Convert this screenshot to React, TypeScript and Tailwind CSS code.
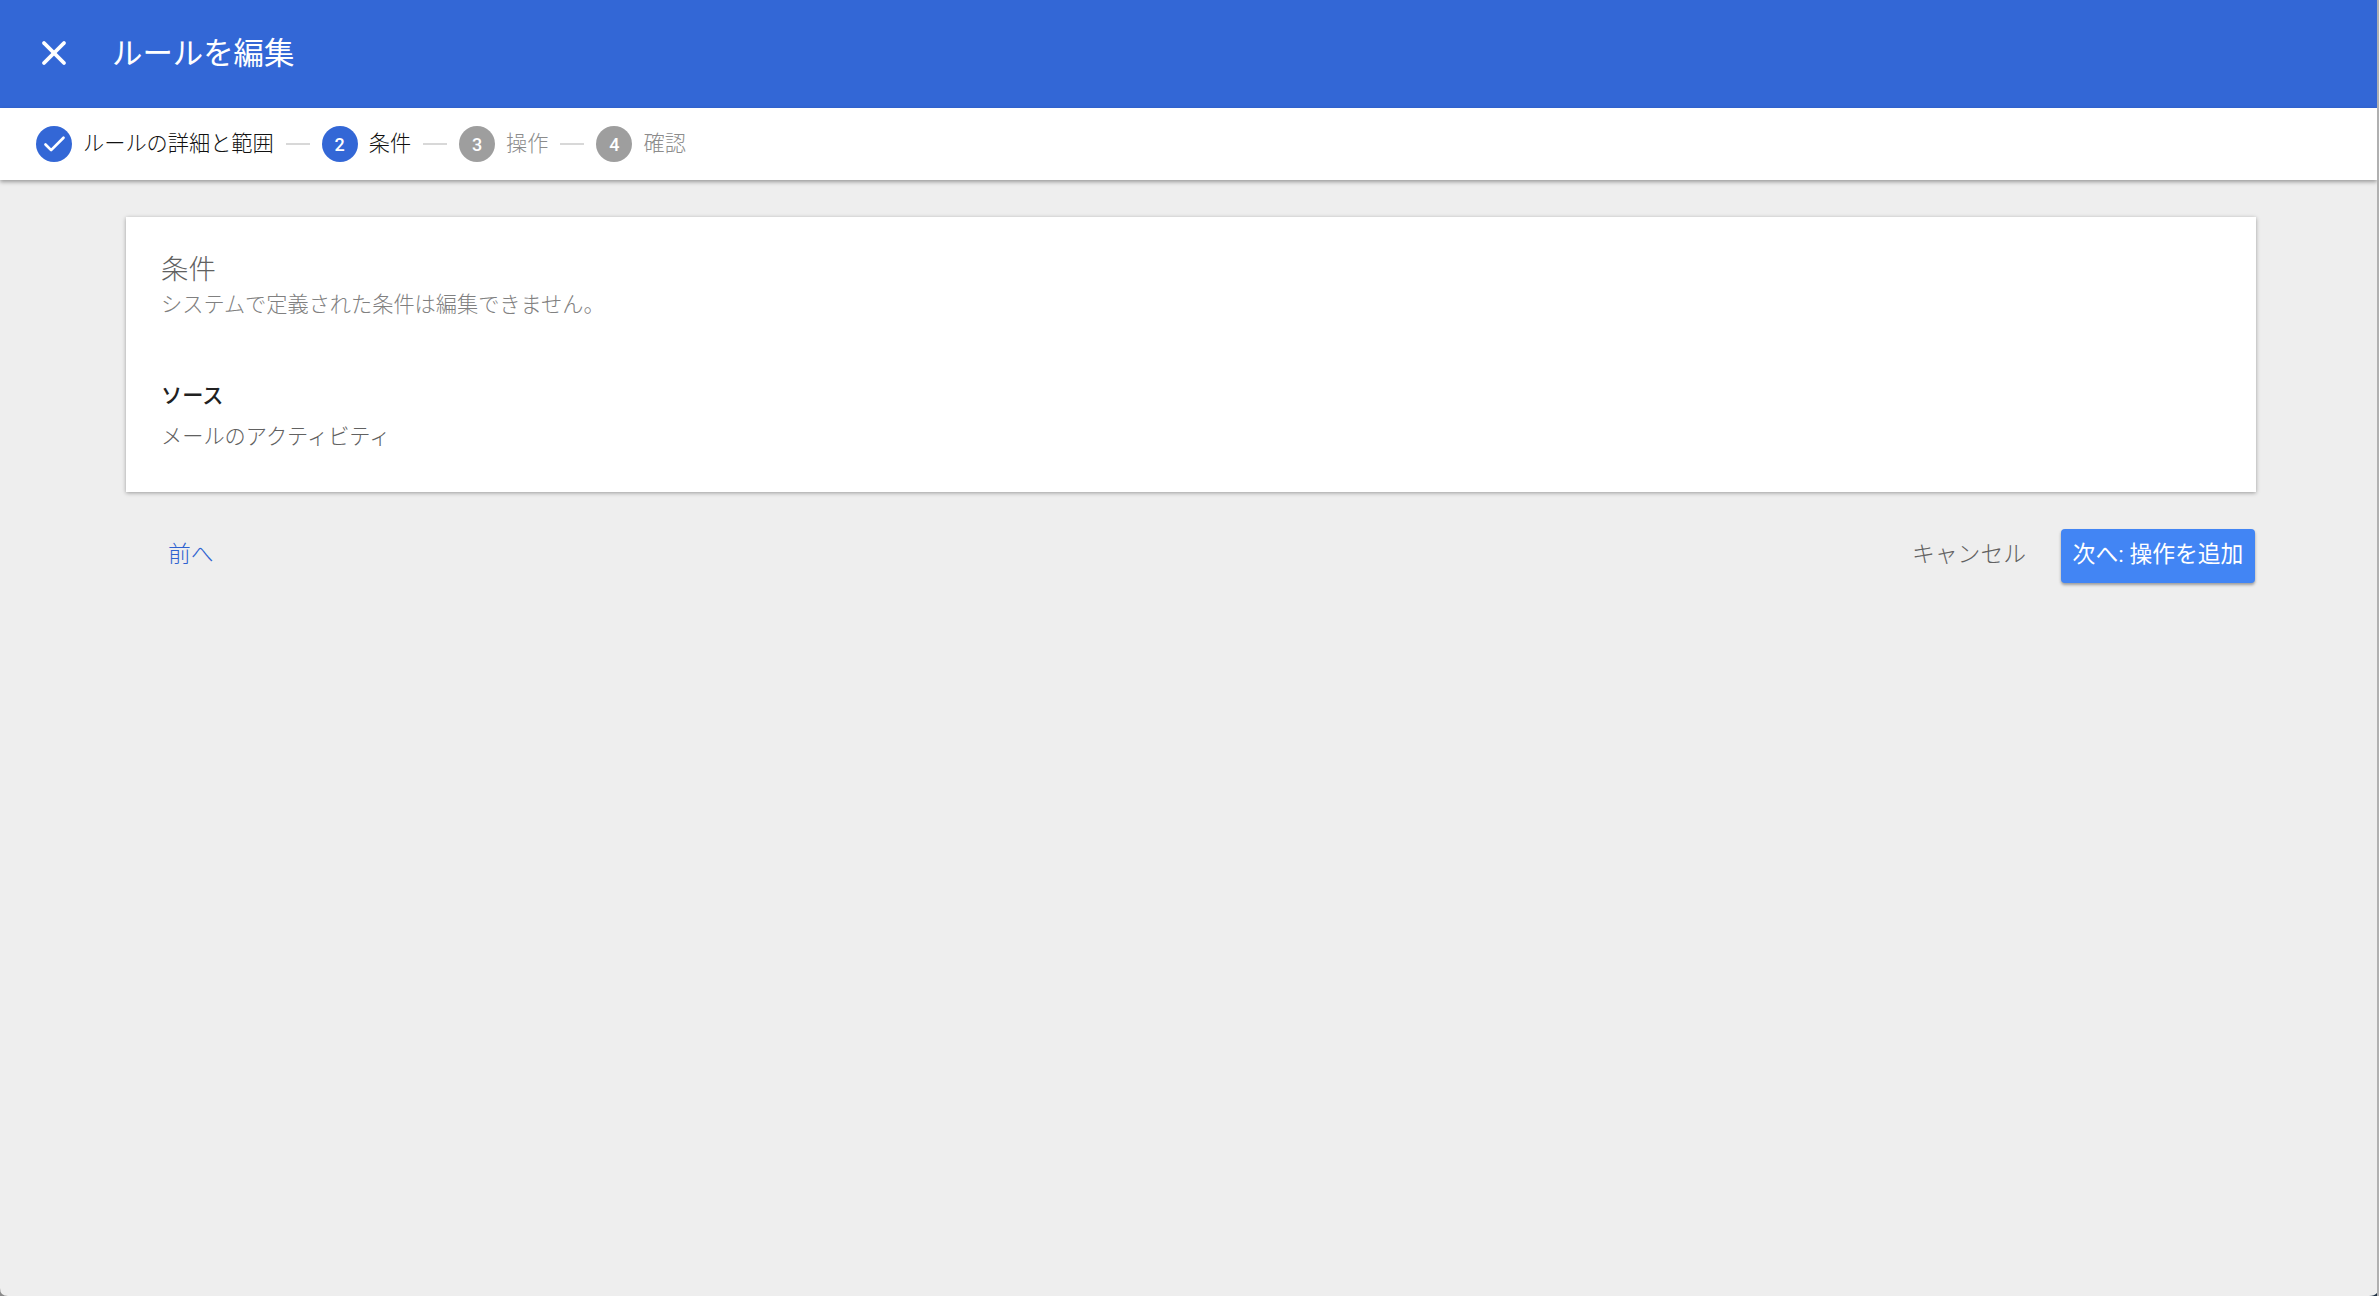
import React from 'react';
import { X, Check } from 'lucide-react';

const FONT = "font-['Roboto','Noto_Sans_CJK_JP',sans-serif]";

type StepState = 'done' | 'active' | 'pending';

interface Step {
    label: string;
    state: StepState;
    number: number;
}

const STEPS: Step[] = [
    { label: 'ルールの詳細と範囲', state: 'done', number: 1 },
    { label: '条件', state: 'active', number: 2 },
    { label: '操作', state: 'pending', number: 3 },
    { label: '確認', state: 'pending', number: 4 },
];

const StepItem: React.FC<{ step: Step }> = ({ step }) => (
    <div className="flex items-center">
        <div
            className={`flex h-9 w-9 items-center justify-center rounded-full text-[18px] font-medium text-white ${
                step.state === 'pending' ? 'bg-[#9e9e9e]' : 'bg-[#3367d6]'
            }`}
        >
            {step.state === 'done' ? <Check className="h-[27px] w-[27px]" strokeWidth={2.4} /> : step.number}
        </div>
        <span className={`ml-[11px] text-[21.2px] font-light ${step.state === 'pending' ? 'text-[#8c8c8c]' : 'text-[#111111]'}`}>
            {step.label}
        </span>
    </div>
);

const App: React.FC = () => {
    return (
        <div className={`relative flex h-[1296px] w-full flex-col overflow-hidden border-r-2 border-[#b0b0b0] bg-[#eeeeee] ${FONT}`}>
            <header className="flex h-[108px] shrink-0 items-center bg-[#3367d6] pl-[34px] text-white">
                <X className="mb-[3px] h-10 w-10" strokeWidth={2.3} />
                <h1 className="ml-[38px] text-[30.4px] font-normal">ルールを編集</h1>
            </header>

            <nav className="z-10 flex h-[72px] shrink-0 items-center gap-3 bg-white pl-[36px] shadow-[0_2px_4px_rgba(0,0,0,0.35)]">
                {STEPS.map((step, i) => (
                    <React.Fragment key={step.label}>
                        {i > 0 && <div className="h-[2px] w-6 bg-[#d8d8d8]" />}
                        <StepItem step={step} />
                    </React.Fragment>
                ))}
            </nav>

            <main className="pt-[37px] pr-[121px] pl-[126px]">
                <section className="h-[275px] bg-white px-[35px] pt-[35px] shadow-[0_1px_4px_rgba(0,0,0,0.35)]">
                    <h2 className="text-[27.4px] leading-[36px] font-light text-[#616161]">条件</h2>
                    <p className="mt-[2px] text-[21.2px] leading-[30px] font-light text-[#808080]">システムで定義された条件は編集できません。</p>
                    <h3 className="mt-[61px] text-[21.2px] leading-[30px] font-medium text-[#212121]">ソース</h3>
                    <p className="mt-[11px] text-[21.2px] leading-[30px] font-light text-[#616161]">メールのアクティビティ</p>
                </section>

                <div className="mt-[37px] flex items-center justify-between">
                    <button className="ml-[42px] pb-[2px] text-[22.8px] font-light text-[#2f62d0]">前へ</button>
                    <div className="flex items-center">
                        <button className="pb-[2px] text-[22.8px] font-light text-[#616161]">キャンセル</button>
                        <button className="mr-[1px] ml-[35px] h-[54px] w-[194px] rounded-[4px] bg-[#4285f4] pb-[2px] text-[22.8px] text-white shadow-[0_2px_3px_rgba(0,0,0,0.35)]">
                            次へ: 操作を追加
                        </button>
                    </div>
                </div>
            </main>

            {/* window corners showing through at the bottom */}
            <svg className="absolute bottom-0 left-0 h-2 w-2" viewBox="0 0 8 8">
                <path d="M0 0 Q0 8 8 8 H0 Z" fill="#8a8a8a" />
            </svg>
            <svg className="absolute right-[-2px] bottom-0 h-[10px] w-[10px]" viewBox="0 0 10 10">
                <path d="M10 0 Q10 10 0 10 H10 Z" fill="#1c2f42" />
            </svg>
        </div>
    );
};

export default App;
